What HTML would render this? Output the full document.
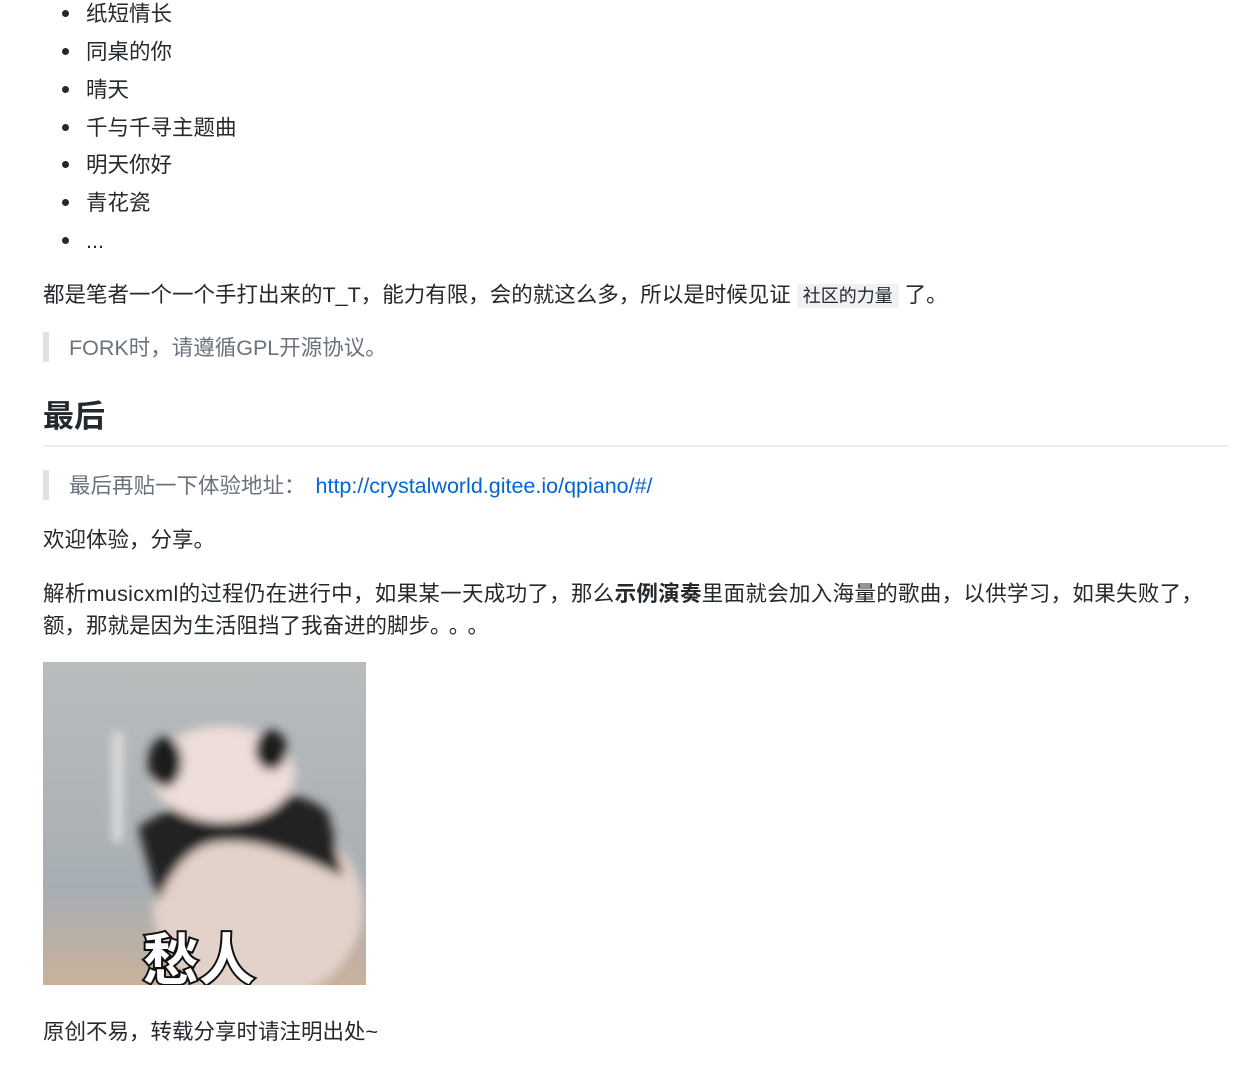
<!DOCTYPE html>
<html><head><meta charset="utf-8"><style>
body{margin:0;width:1240px;height:1075px;background:#fff;overflow:hidden;font-family:"Liberation Sans","Noto Sans CJK SC",sans-serif;color:#24292e;font-size:21.5px;}
.a{position:absolute;white-space:nowrap;line-height:30px;}
.b{position:absolute;left:62px;width:7px;height:7px;border-radius:50%;background:#24292e;}
.q{position:absolute;left:43px;width:6px;background:#dfe2e5;}
code{background:#f0f1f2;border-radius:4px;padding:2px 6px;font-size:18px;font-family:"Liberation Sans","Noto Sans CJK SC",sans-serif;}
</style></head><body>
<div class="b" style="top:10px"></div><div class="a" style="left:86px;top:-1px">纸短情长</div>
<div class="b" style="top:48px"></div><div class="a" style="left:86px;top:37px">同桌的你</div>
<div class="b" style="top:86px"></div><div class="a" style="left:86px;top:75px">晴天</div>
<div class="b" style="top:124px"></div><div class="a" style="left:86px;top:113px">千与千寻主题曲</div>
<div class="b" style="top:161px"></div><div class="a" style="left:86px;top:150px">明天你好</div>
<div class="b" style="top:199px"></div><div class="a" style="left:86px;top:188px">青花瓷</div>
<div class="b" style="top:237px"></div><div class="a" style="left:86px;top:226px">...</div>
<div class="a" style="left:43px;top:280px">都是笔者一个一个手打出来的T_T，能力有限，会的就这么多，所以是时候见证 <code>社区的力量</code> 了。</div>
<div class="q" style="top:332px;height:30px"></div>
<div class="a" style="left:69px;top:333px;color:#6a737d">FORK时，请遵循GPL开源协议。</div>
<div class="a" style="left:43px;top:399px;font-size:31px;font-weight:bold;line-height:36px">最后</div>
<div style="position:absolute;left:43px;top:445px;width:1186px;height:2px;background:#eaecef"></div>
<div class="q" style="top:470px;height:30px"></div>
<div class="a" style="left:69px;top:471px;color:#6a737d">最后再贴一下体验地址：<span style="color:#0366d6;margin-left:10px">http://crystalworld.gitee.io/qpiano/#/</span></div>
<div class="a" style="left:43px;top:525px">欢迎体验，分享。</div>
<div class="a" style="left:43px;top:579px;letter-spacing:0.3px">解析musicxml的过程仍在进行中，如果某一天成功了，那么<b>示例演奏</b>里面就会加入海量的歌曲，以供学习，如果失败了，</div>
<div class="a" style="left:43px;top:611px">额，那就是因为生活阻挡了我奋进的脚步<span style="letter-spacing:8px">。。。</span></div>
<svg style="position:absolute;left:43px;top:662px" width="323" height="323" viewBox="0 0 323 323">
<defs><filter id="f"><feGaussianBlur stdDeviation="5"/></filter><linearGradient id="g" x1="0" y1="0" x2="0" y2="1"><stop offset="0" stop-color="#b9bcbd"/><stop offset=".7" stop-color="#a7aeb3"/><stop offset="1" stop-color="#c9b19a"/></linearGradient></defs>
<rect width="323" height="323" fill="url(#g)"/>
<g filter="url(#f)">
<ellipse cx="215" cy="245" rx="105" ry="95" fill="#e3d2ca"/>
<path d="M95 165 Q150 130 185 140 Q250 120 285 150 L300 215 Q220 175 180 180 Q140 180 115 240 Z" fill="#222"/>
<ellipse cx="180" cy="112" rx="72" ry="48" fill="#eeddd9"/>
<ellipse cx="122" cy="100" rx="17" ry="25" fill="#1a1a1a"/>
<ellipse cx="228" cy="88" rx="16" ry="20" fill="#1a1a1a"/>
<rect x="70" y="70" width="9" height="110" fill="#e4e4e4"/>
</g>
<text x="100" y="318" font-size="56" font-weight="bold" fill="#fff" stroke="#111" stroke-width="4" paint-order="stroke" font-family="Noto Sans CJK SC,sans-serif">愁人</text>
</svg>
<div class="a" style="left:43px;top:1017px">原创不易，转载分享时请注明出处~</div>
</body></html>
